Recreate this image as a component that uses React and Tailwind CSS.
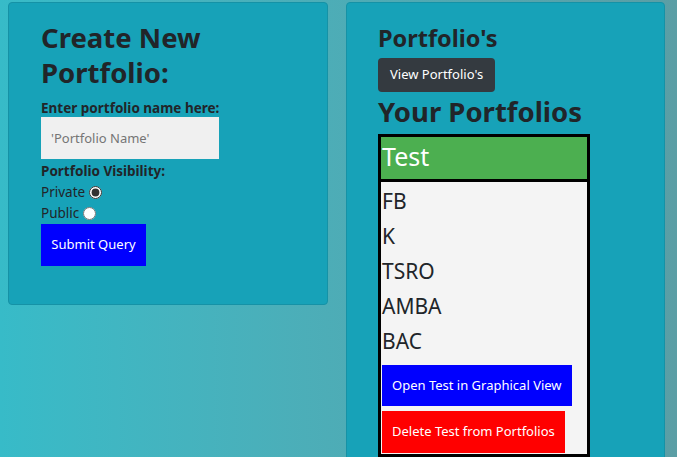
import React, { useState } from 'react';

const font = { fontFamily: '"Noto Sans", "Open Sans", sans-serif' };

const App = () => {
  const [visibility, setVisibility] = useState('private');
  const stocks = ['FB', 'K', 'TSRO', 'AMBA', 'BAC'];

  return (
    <div
      className="min-h-screen w-full bg-gradient-to-r from-[#37bbc8] to-[#5b9ea5] text-[#212529] flex items-start pt-[2px] pl-[8px] gap-[18px]"
      style={font}
    >
      {/* Create portfolio card */}
      <div className="w-[320px] h-[303px] bg-[#17a2b8] border border-[#1592a6] rounded-[4px] pl-[32px] pt-[17px]">
        <h2 className="text-[27.5px] font-bold leading-[35px]">
          Create New
          <br />
          Portfolio:
        </h2>
        <p className="text-[13.5px] font-bold mt-[9px] leading-[18px]">Enter portfolio name here:</p>
        <input
          type="text"
          placeholder="'Portfolio Name'"
          className="block w-[178px] h-[42px] bg-[#f0f0f0] px-[10px] text-[13px] placeholder:text-[#757575] outline-none"
        />
        <p className="text-[13.5px] font-bold mt-[3px] leading-[18px]">Portfolio Visibility:</p>
        <label className="flex items-center text-[13.5px] leading-[21px] mt-[2px]">
          Private
          <input
            type="radio"
            name="vis"
            checked={visibility === 'private'}
            onChange={() => setVisibility('private')}
            className="ml-[4px] w-[13px] h-[13px] accent-[#333]"
          />
        </label>
        <label className="flex items-center text-[13.5px] leading-[21px]">
          Public
          <input
            type="radio"
            name="vis"
            checked={visibility === 'public'}
            onChange={() => setVisibility('public')}
            className="ml-[4px] w-[13px] h-[13px]"
          />
        </label>
        <button className="w-[105px] h-[42px] bg-[#0000ff] text-white text-[13px]">Submit Query</button>
      </div>

      {/* Portfolios card */}
      <div className="w-[319px] bg-[#17a2b8] border border-[#1592a6] rounded-[4px] pl-[31px] pt-[20px] pb-[20px]">
        <h3 className="text-[23.5px] font-bold leading-[30px]">Portfolio's</h3>
        <button className="mt-[5px] h-[34px] px-[12px] bg-[#343a40] text-white text-[13px] rounded-[4px]">
          View Portfolio's
        </button>
        <h2 className="pt-[3px] text-[27.5px] font-bold leading-[34px]">Your Portfolios</h2>
        <div className="mt-[5px] w-[212px] border-[3px] border-black bg-[#f4f4f4] pb-[1px]">
          <div className="bg-[#4caf50] h-[45px] border-b-[3px] border-black px-[1px] text-white text-[25px] leading-[38px]">
            Test
          </div>
          <div className="px-[1px] pt-[2px]">
            {stocks.map((s) => (
              <p key={s} className="text-[21px] leading-[35px]">{s}</p>
            ))}
            <button className="mt-[6px] h-[41px] px-[10px] bg-[#0000ff] text-white text-[13px]">
              Open Test in Graphical View
            </button>
            <button className="block mt-[5px] h-[42px] px-[10px] bg-[#ff0000] text-white text-[13px]">
              Delete Test from Portfolios
            </button>
          </div>
        </div>
      </div>
    </div>
  );
};

export default App;
